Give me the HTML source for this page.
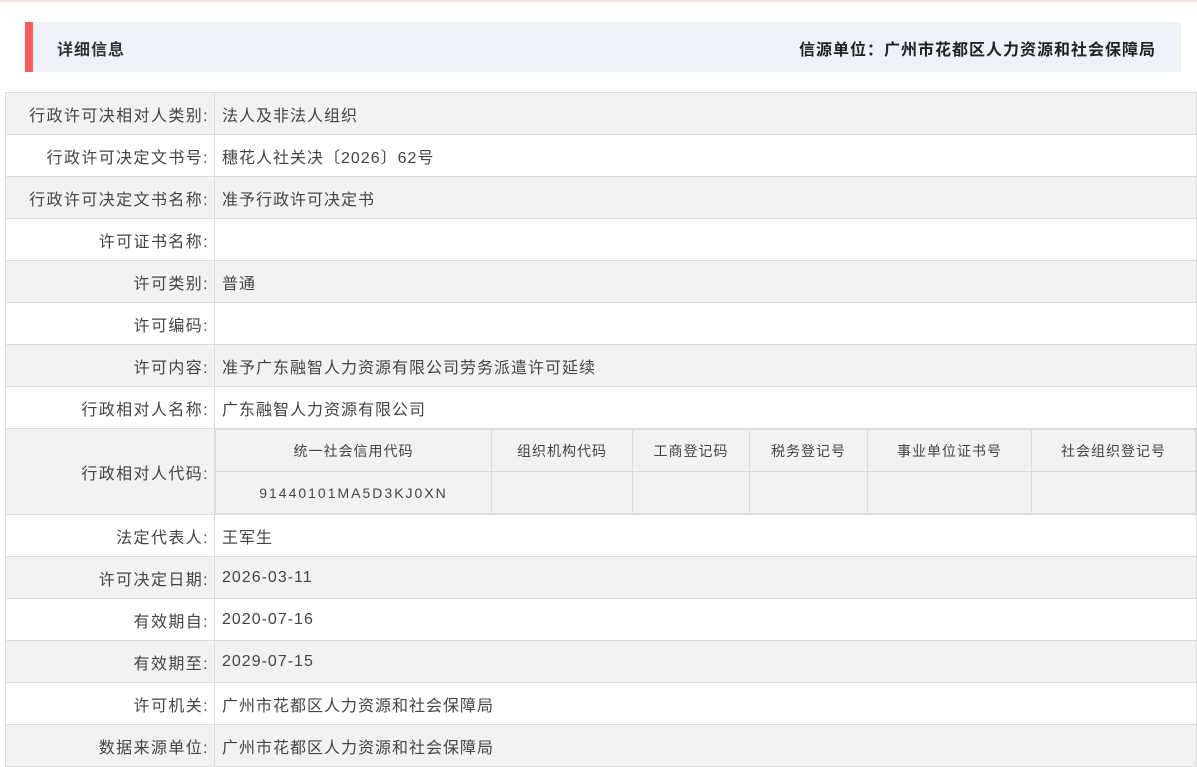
<!DOCTYPE html>
<html><head><meta charset="utf-8"><style>
*{margin:0;padding:0;box-sizing:border-box}
body{width:1197px;height:767px;background:#fff;font-family:"Liberation Sans","Noto Sans CJK SC",sans-serif;color:#333;position:relative;overflow:hidden}
.top{position:absolute;left:0;top:0;width:1197px;height:2px;background:#f3e2dc}
.hdr{position:absolute;left:25px;top:22px;width:1156px;height:50px;background:#edf2f9;border-left:8px solid #f65e5e}
.hdr .l{position:absolute;left:24px;top:14px;font-size:16px;font-weight:bold;color:#333;letter-spacing:1px}
.hdr .r{position:absolute;right:25px;top:14px;font-size:16px;font-weight:bold;color:#222;letter-spacing:1px}
table.m{position:absolute;left:5px;top:92px;width:1192px;border-collapse:collapse;font-size:16px}
table.m td{border:1px solid #dcdcdc;height:42px;padding:0 7px;color:#444;letter-spacing:1px}
table.m td.k{width:209px;text-align:right;padding-right:5px;letter-spacing:1.4px}
table.m tr.g td{background:#f2f2f2}
table.i{width:100%;border-collapse:collapse;font-size:14px}
table.i td{border:1px solid #dcdcdc;height:42px;text-align:center;background:#f2f2f2;padding:0;letter-spacing:1px}
td.c{padding:0!important}
</style></head><body>
<div class="top"></div>
<div class="hdr"><span class="l">详细信息</span><span class="r">信源单位：广州市花都区人力资源和社会保障局</span></div>
<table class="m">
<tr class="g"><td class="k">行政许可决相对人类别:</td><td>法人及非法人组织</td></tr>
<tr><td class="k">行政许可决定文书号:</td><td>穗花人社关决〔2026〕62号</td></tr>
<tr class="g"><td class="k">行政许可决定文书名称:</td><td>准予行政许可决定书</td></tr>
<tr><td class="k">许可证书名称:</td><td></td></tr>
<tr class="g"><td class="k">许可类别:</td><td>普通</td></tr>
<tr><td class="k">许可编码:</td><td></td></tr>
<tr class="g"><td class="k">许可内容:</td><td>准予广东融智人力资源有限公司劳务派遣许可延续</td></tr>
<tr><td class="k">行政相对人名称:</td><td>广东融智人力资源有限公司</td></tr>
<tr class="g"><td class="k" style="height:86px">行政相对人代码:</td><td class="c">
<table class="i">
<tr><td style="width:276px">统一社会信用代码</td><td style="width:141px">组织机构代码</td><td style="width:117px">工商登记码</td><td style="width:118px">税务登记号</td><td style="width:164px">事业单位证书号</td><td>社会组织登记号</td></tr>
<tr><td style="letter-spacing:2px">91440101MA5D3KJ0XN</td><td></td><td></td><td></td><td></td><td></td></tr>
</table></td></tr>
<tr><td class="k">法定代表人:</td><td>王军生</td></tr>
<tr class="g"><td class="k">许可决定日期:</td><td>2026-03-11</td></tr>
<tr><td class="k">有效期自:</td><td>2020-07-16</td></tr>
<tr class="g"><td class="k">有效期至:</td><td>2029-07-15</td></tr>
<tr><td class="k">许可机关:</td><td>广州市花都区人力资源和社会保障局</td></tr>
<tr class="g"><td class="k">数据来源单位:</td><td>广州市花都区人力资源和社会保障局</td></tr>
</table>
</body></html>
